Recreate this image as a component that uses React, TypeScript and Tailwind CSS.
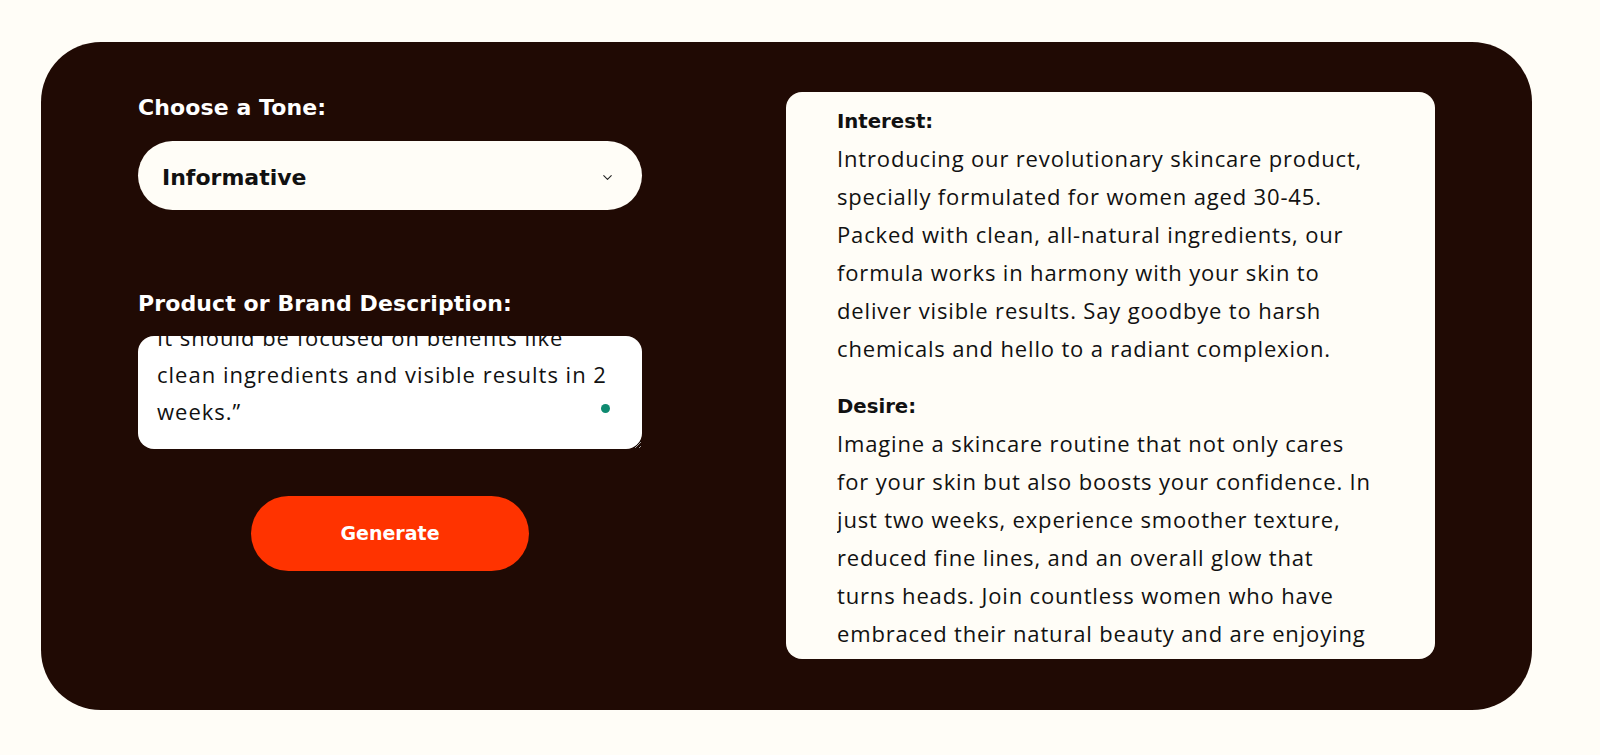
import { useEffect, useRef } from "react";
import { ChevronDown } from "lucide-react";

const briefText =
  "“Write an AIDA ad copy for a new skincare\nproduct targeted at women aged 30-45.\nIt should be focused on benefits like\nclean ingredients and visible results in 2\nweeks.”";

const copySections = [
  {
    title: "Interest:",
    lines: [
      "Introducing our revolutionary skincare product,",
      "specially formulated for women aged 30-45.",
      "Packed with clean, all-natural ingredients, our",
      "formula works in harmony with your skin to",
      "deliver visible results. Say goodbye to harsh",
      "chemicals and hello to a radiant complexion.",
    ],
  },
  {
    title: "Desire:",
    lines: [
      "Imagine a skincare routine that not only cares",
      "for your skin but also boosts your confidence. In",
      "just two weeks, experience smoother texture,",
      "reduced fine lines, and an overall glow that",
      "turns heads. Join countless women who have",
      "embraced their natural beauty and are enjoying",
      "the results they deserve.",
    ],
  },
  {
    title: "Action:",
    lines: [
      "Don't wait any longer to reveal your best skin.",
      "Order now and see the difference in 2 weeks.",
    ],
  },
];

export default function App() {
  const briefRef = useRef<HTMLTextAreaElement>(null);

  useEffect(() => {
    if (briefRef.current) {
      briefRef.current.scrollTop = briefRef.current.scrollHeight;
    }
  }, []);

  return (
    <div className="min-h-[755px] w-full bg-[#fffdf7] pt-[42px] font-['Open_Sans',sans-serif]">
      <div className="ml-[41px] flex h-[668px] w-[1491px] items-start gap-[144px] rounded-[60px] bg-[#200a04] px-[97px] py-[50px]">
        <div className="flex w-[504px] flex-col">
          <label className="h-[28px] pt-[2px] font-['DejaVu_Sans',sans-serif] text-[22px] leading-[28px] font-bold tracking-[0.1px] text-white">
            Choose a Tone:
          </label>
          <button className="mt-[21px] flex h-[69px] w-full items-center justify-between rounded-full bg-[#fffdf7] pt-[3px] pr-[27px] pl-[24px] font-['DejaVu_Sans',sans-serif] text-[22px] font-bold text-[#111]">
            <span>Informative</span>
            <ChevronDown size={15} strokeWidth={1.7} className="text-[#222]" />
          </button>

          <label className="mt-[78px] h-[28px] pt-[2px] font-['DejaVu_Sans',sans-serif] text-[22px] leading-[28px] font-bold tracking-[0.1px] text-white">
            Product or Brand Description:
          </label>
          <div className="relative mt-[20px]">
            <textarea
              ref={briefRef}
              defaultValue={briefText}
              className="block h-[113px] w-full overflow-hidden rounded-[16px] bg-white px-[19px] py-[19px] text-[22px] leading-[37px] tracking-[1px] text-[#111] outline-none"
            />
            <span className="absolute top-[68px] right-[32px] h-[9px] w-[9px] rounded-full bg-[#0e8a70]" />
          </div>

          <button className="mx-auto mt-[47px] h-[75px] w-[278px] rounded-full bg-[#ff3300] font-['DejaVu_Sans',sans-serif] text-[19px] font-bold text-white">
            Generate
          </button>
        </div>

        <div className="h-[567px] w-[649px] rounded-[16px] bg-[#fffdf7] px-[51px] pt-[9px]">
          <div className="h-[551px] overflow-hidden text-[22px] leading-[38px] tracking-[0.84px] text-[#111]">
            {copySections.map((section) => (
              <div key={section.title} className="mb-[19px]">
                <p className="h-[38px] pt-[2px] font-['DejaVu_Sans',sans-serif] text-[19.7px] font-bold tracking-normal">
                  {section.title}
                </p>
                {section.lines.map((line) => (
                  <p key={line} className="whitespace-nowrap">
                    {line}
                  </p>
                ))}
              </div>
            ))}
          </div>
        </div>
      </div>
    </div>
  );
}
